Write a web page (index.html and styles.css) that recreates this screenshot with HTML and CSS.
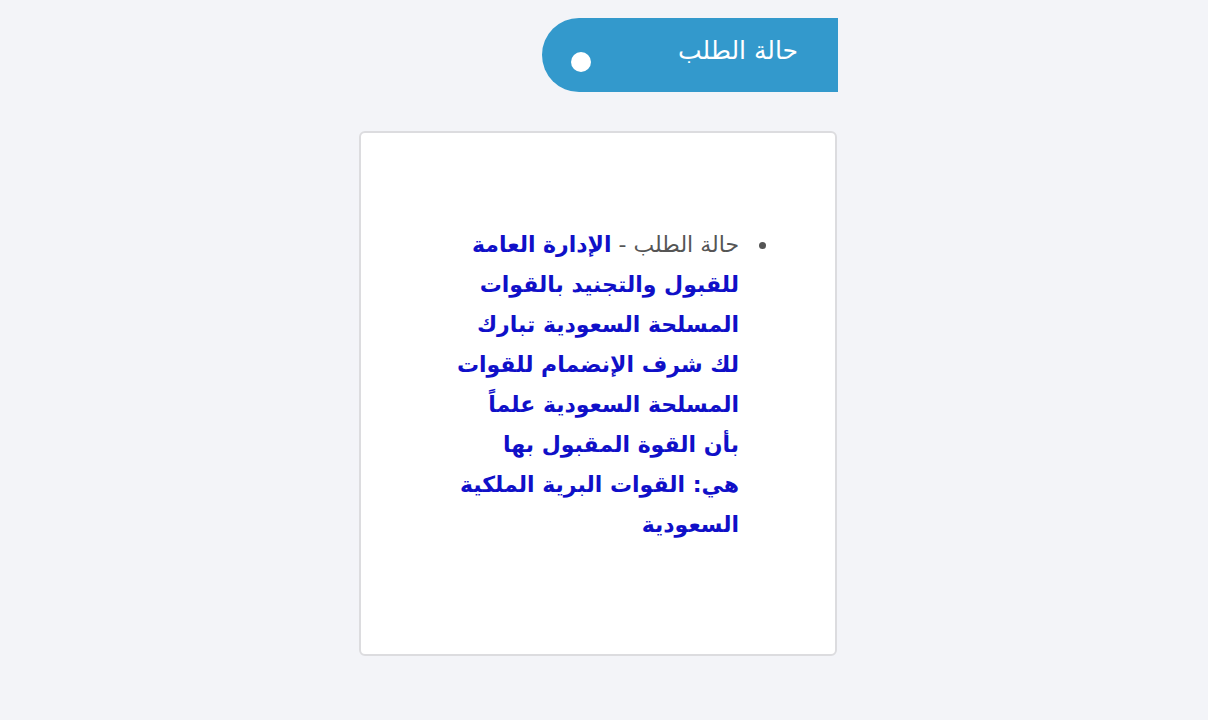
FILE: index.html
```html
<!DOCTYPE html>
<html lang="ar">
<head>
<meta charset="utf-8">
<link rel="stylesheet" href="styles.css">
</head>
<body>
<div class="page">
  <div class="status-tab">
    <span class="dot"></span>
    <span class="tab-title">حالة الطلب</span>
  </div>
  <div class="card">
    <ul class="status-list">
      <li><span class="label">حالة الطلب - </span><span class="msg">الإدارة العامة<br>للقبول والتجنيد بالقوات<br>المسلحة السعودية تبارك<br>لك شرف الإنضمام للقوات<br>المسلحة السعودية علماً<br>بأن القوة المقبول بها<br>هي: القوات البرية الملكية<br>السعودية</span></li>
    </ul>
  </div>
</div>
</body>
</html>
```
FILE: styles.css
```css
html, body {
  margin: 0;
  padding: 0;
  background: #f3f4f8;
  font-family: "DejaVu Sans", sans-serif;
}
.page {
  width: 478px;
  margin-left: 359px;
  padding-top: 18px;
  display: flex;
  flex-direction: column;
  align-items: flex-end;
}
.status-tab {
  width: 296px;
  height: 74px;
  margin-right: -1px;
  background: #3399cc;
  border-radius: 37px 0 0 37px;
  display: flex;
  align-items: center;
  justify-content: space-between;
  box-sizing: border-box;
  padding: 0 40px 0 29px;
}
.dot {
  width: 20px;
  height: 20px;
  border-radius: 50%;
  background: #ffffff;
  margin-top: 14px;
}
.tab-title {
  color: #ffffff;
  font-size: 25px;
  direction: rtl;
  margin-top: -10px;
}
.card {
  margin-top: 39px;
  width: 478px;
  height: 525px;
  box-sizing: border-box;
  background: #ffffff;
  border: 2px solid #dcdcdf;
  border-radius: 6px;
  padding: 92px 66px 0 0;
  direction: rtl;
}
.status-list {
  margin: 0;
  padding: 0 23px 0 0;
  list-style: disc;
  color: #555555;
  font-size: 22px;
  line-height: 40px;
}
.status-list li {
  white-space: nowrap;
  padding-right: 7px;
}
.label {
  color: #555555;
}
.msg {
  color: #1010c8;
  font-weight: bold;
}
```
